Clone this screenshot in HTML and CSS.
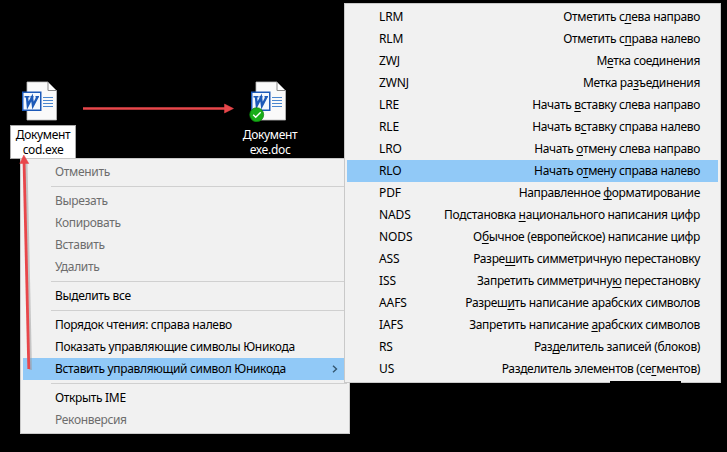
FILE: index.html
```
<!DOCTYPE html>
<html lang="ru">
<head>
<meta charset="utf-8">
<title>Документ</title>
<link rel="stylesheet" href="styles.css">
</head>
<body>
<main class="desktop">
  <svg class="arrow" width="727" height="452"><path d="M83 108.500H228" stroke="#e8474b" stroke-width="2.600"/><path d="M224.500 104L233.500 108.500L224.500 113Z" fill="#e8474b" stroke="#e8474b" stroke-width=".5"/></svg>

  <figure class="file file-renamed">
    <svg class="doc" width="40" height="42" viewBox="0 0 40 42">
      <path d="M7 2H28L36.500 10.500V40H7Z" fill="#fafafa" stroke="#bcbcbc" stroke-width=".8"/>
      <path d="M28 2V10.500H36.500Z" fill="#fff" stroke="#888" stroke-width="1"/>
      <path d="M23 17.500H33M23 20.500H33M23 23.500H33M23 26.500H33" stroke="#4b87cf" stroke-width="1.200"/>
      <rect x="2" y="11.500" width="19.500" height="19.500" fill="#1c59b8"/>
      <rect x="3.500" y="13" width="16.500" height="16.500" fill="#f4f8fd"/>
      <path d="M4.500 16.700H9.500M10.500 16.700H13.500M15.500 16.700H19" fill="none" stroke="#1c59b8" stroke-width="1.500"/>
      <path d="M7 17L7.800 25.500L12 17.500L13 25.500L17.500 17" fill="none" stroke="#1c59b8" stroke-width="2.400"/>
    </svg>
    <figcaption class="label label-edit"><span>Документ</span><span>cod.exe</span></figcaption>
  </figure>

  <figure class="file file-result">
    <svg class="doc" width="40" height="42" viewBox="0 0 40 42">
      <path d="M7 2H28L36.500 10.500V40H7Z" fill="#fafafa" stroke="#bcbcbc" stroke-width=".8"/>
      <path d="M28 2V10.500H36.500Z" fill="#fff" stroke="#888" stroke-width="1"/>
      <path d="M23 17.500H33M23 20.500H33M23 23.500H33M23 26.500H33" stroke="#4b87cf" stroke-width="1.200"/>
      <rect x="2" y="11.500" width="19.500" height="19.500" fill="#1c59b8"/>
      <rect x="3.500" y="13" width="16.500" height="16.500" fill="#f4f8fd"/>
      <path d="M4.500 16.700H9.500M10.500 16.700H13.500M15.500 16.700H19" fill="none" stroke="#1c59b8" stroke-width="1.500"/>
      <path d="M7 17L7.800 25.500L12 17.500L13 25.500L17.500 17" fill="none" stroke="#1c59b8" stroke-width="2.400"/>
      <circle cx="7.700" cy="34.700" r="7" fill="#18ad18" stroke="#087e08" stroke-width=".7"/>
      <path d="M4.200 34.700L6.700 37.200L11.700 32.200" fill="none" stroke="#fff" stroke-width="1.400"/>
    </svg>
    <figcaption class="label"><span>Документ</span><span>exe.doc</span></figcaption>
  </figure>

  <ul class="menu menu-main">
    <li class="row off">Отменить</li>
    <li class="sep"></li>
    <li class="row off">Вырезать</li>
    <li class="row off">Копировать</li>
    <li class="row off">Вставить</li>
    <li class="row off">Удалить</li>
    <li class="sep"></li>
    <li class="row">Выделить все</li>
    <li class="sep"></li>
    <li class="row">Порядок чтения: справа налево</li>
    <li class="row">Показать управляющие символы Юникода</li>
    <li class="row on">Вставить управляющий символ Юникода<svg class="chevron" width="6" height="8" viewBox="0 0 6 8"><path d="M1 .7L4.500 4L1 7.300" fill="none" stroke="#34566f" stroke-width="1.400"/></svg></li>
    <li class="sep"></li>
    <li class="row">Открыть IME</li>
    <li class="row off">Реконверсия</li>
  </ul>

  <ul class="menu menu-sub">
    <li class="row"><b>LRM</b><span>Отметить с<u>л</u>ева направо</span></li>
    <li class="row"><b>RLM</b><span>Отметить с<u>п</u>рава налево</span></li>
    <li class="row"><b>ZWJ</b><span>М<u>е</u>тка соединения</span></li>
    <li class="row"><b>ZWNJ</b><span>Метка ра<u>з</u>ъединения</span></li>
    <li class="row"><b>LRE</b><span>Начать <u>в</u>ставку слева направо</span></li>
    <li class="row"><b>RLE</b><span>Начать в<u>с</u>тавку справа налево</span></li>
    <li class="row"><b>LRO</b><span>Начать <u>о</u>тмену слева направо</span></li>
    <li class="row on"><b>RLO</b><span>Начать о<u>т</u>мену справа налево</span></li>
    <li class="row"><b>PDF</b><span>Направленное <u>ф</u>орматирование</span></li>
    <li class="row"><b>NADS</b><span>Подстановка <u>н</u>ационального написания цифр</span></li>
    <li class="row"><b>NODS</b><span>О<u>б</u>ычное (европейское) написание цифр</span></li>
    <li class="row"><b>ASS</b><span>Разре<u>ш</u>ить симметричную перестановку</span></li>
    <li class="row"><b>ISS</b><span>Запретить симметричну<u>ю</u> перестановку</span></li>
    <li class="row"><b>AAFS</b><span>Разреш<u>и</u>ть написание арабских символов</span></li>
    <li class="row"><b>IAFS</b><span>Запретить написание <u>а</u>рабских символов</span></li>
    <li class="row"><b>RS</b><span>Раз<u>д</u>елитель записей (блоков)</span></li>
    <li class="row"><b>US</b><span>Разделитель элементов (се<u>г</u>ментов)</span></li>
  </ul>
  <div class="notch"></div>

  <svg class="arrow" width="727" height="452"><path d="M30.500 370L26 163" stroke="#999" stroke-opacity=".5" stroke-width="3"/><path d="M28.800 369L24 160" stroke="#e8474b" stroke-width="2.800"/><path d="M19.800 163.500L23.800 155L28.800 163.500Z" fill="#e8474b" stroke="#e8474b" stroke-width=".5"/></svg>
</main>
</body>
</html>
```

FILE: styles.css
```
body { margin: 0; background: #000; }
.desktop {
  position: relative;
  width: 727px;
  height: 452px;
  overflow: hidden;
  background: #000;
  font: 12px/22px "Noto Sans", "Open Sans", sans-serif;
  letter-spacing: -.33px;
}
.arrow { position: absolute; left: 0; top: 0; }
.file {
  position: absolute;
  top: 80px;
  margin: 0;
  display: flex;
  flex-direction: column;
  align-items: center;
}
.file-renamed { left: 10px; width: 66px; }
.file-result { left: 237px; width: 66px; }
.doc { display: block; margin-left: -6px; }
.file-result .doc { margin-left: -3px; }
.label {
  box-sizing: border-box;
  width: 66px;
  height: 34px;
  margin-top: 3px;
  padding-top: 2px;
  display: flex;
  flex-direction: column;
  align-items: center;
  color: #fff;
  line-height: 15px;
}
.label-edit { padding-top: 1px; background: #fff; color: #000; border: 1px solid #aaa; }
.menu {
  position: absolute;
  box-sizing: border-box;
  margin: 0;
  padding: 2px;
  list-style: none;
  background: #f1f1f1;
  border: 1px solid #c9c9c9;
  color: #000;
}
.menu-main { left: 20px; top: 158px; width: 330px; height: 276px; }
.menu-sub { left: 344px; top: 3px; width: 377px; height: 380px; }
.row {
  display: flex;
  justify-content: space-between;
  align-items: center;
  height: 22px;
  padding: 0 18px 0 32px;
  white-space: nowrap;
}
.menu-main .row { padding-right: 8px; }
.row b { font-weight: 400; letter-spacing: -.1px; }
.row u { text-underline-offset: 2px; text-decoration-skip-ink: none; }
.off { color: #6d6d6d; }
.on { background: #91c9f7; }
.chevron { margin-right: 1px; }
.sep { height: 7px; display: flex; align-items: center; }
.sep::before { content: ""; height: 1px; flex: 1; margin-left: 28px; background: #d0d0d0; }
.notch { position: absolute; left: 610px; top: 381px; width: 71px; height: 3px; background: #000; }
```
